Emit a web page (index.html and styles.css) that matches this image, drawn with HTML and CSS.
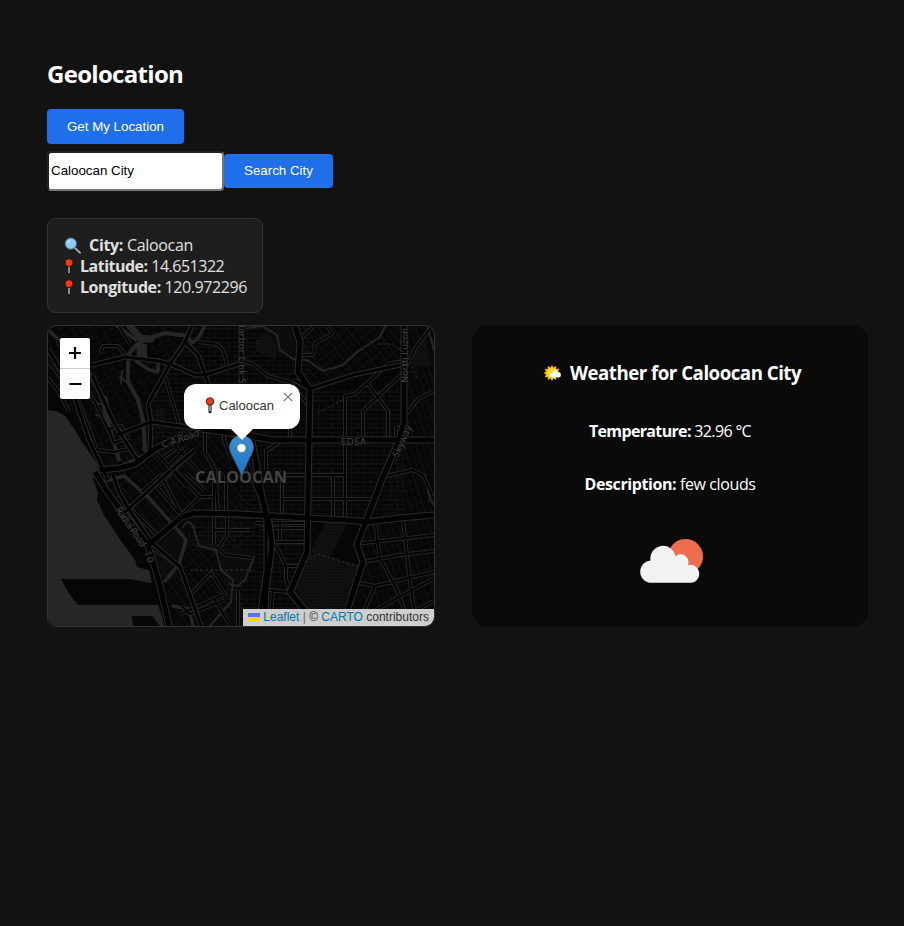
FILE: index.html
```html
<!DOCTYPE html>
<html lang="en">
<head>
<meta charset="utf-8">
<title>Geolocation</title>
<link rel="stylesheet" href="styles.css">
</head>
<body>
<svg class="defs" aria-hidden="true">
  <symbol id="pushpin" viewBox="0 0 10 18">
    <path d="M5 7V15.5" stroke="#111" stroke-width="3.2" stroke-linecap="round"/>
    <path d="M5 7V15.3" stroke="#ddd" stroke-width="1.2"/>
    <circle cx="5" cy="4.7" r="4" fill="#f03a17" stroke="#111" stroke-width=".8"/>
  </symbol>
</svg>
<main class="page">
  <h2 class="title">Geolocation</h2>
  <button class="btn locate">Get My Location</button>
  <div class="search">
    <input class="city-input" type="text" value="Caloocan City">
    <button class="btn find">Search City</button>
  </div>
  <section class="info">
    <div class="row"><svg class="lens" viewBox="0 0 18 18"><path d="M10.500 10.500l5.500 5.200" stroke="#111" stroke-width="4" stroke-linecap="round"/><path d="M11 11l5 4.700" stroke="#9aa5ad" stroke-width="2.200" stroke-linecap="round"/><circle cx="6.800" cy="6.600" r="5.700" fill="#8fc8f5" stroke="#4e6675" stroke-width="1"/><path d="M3.800 6.500a3 3 0 0 1 3-3" stroke="#d5edff" fill="none"/></svg><span class="txt city"><b>City:</b> Caloocan</span></div>
    <div class="row"><svg class="pin"><use href="#pushpin"/></svg><span class="txt lat"><b>Latitude:</b> 14.651322</span></div>
    <div class="row"><svg class="pin"><use href="#pushpin"/></svg><span class="txt lng"><b>Longitude:</b> 120.972296</span></div>
  </section>
  <div class="panels">
    <section class="map">
      <svg class="tiles" viewBox="48 326 386 300">
        <defs>
          <pattern id="blocks" width="13" height="9" patternUnits="userSpaceOnUse"><path d="M0 0H13M0 0V9M7 0V5M0 5H13" class="lane"/></pattern>
          <pattern id="slant" width="11" height="8" patternUnits="userSpaceOnUse" patternTransform="rotate(-38)"><path d="M0 0H11M0 0V8M5 0V8" class="lane"/></pattern>
          <pattern id="west" width="12" height="9" patternUnits="userSpaceOnUse" patternTransform="rotate(62)"><path d="M0 0H12M0 0V9M7 0V5" class="lane"/></pattern>
          <pattern id="east" width="12" height="8" patternUnits="userSpaceOnUse" patternTransform="rotate(-18)"><path d="M0 0H12M0 0V8M6 0V8" class="lane"/></pattern>
          <pattern id="dots" width="3" height="3" patternUnits="userSpaceOnUse"><rect width="3" height="3" fill="#0e0e0e"/><rect x="1" y="1" width="1" height="1" fill="#191919"/></pattern>
          <path id="streets" d="M48 361L77 397L97 450L114 452L133 448M57 340L95 402L111 435M48 378L58 391L69 411M109 429L121 426L128 438L114 443ZM130 344L119 326M100 354L103 346L118 346L125 355
            M198 342L217 344L223 350L228 367M165 376L180 427M153 449L187 487M182 430L174 450L160 460M170 465L186 448M186 473L204 490M205 432V452L215 470L218 514M224 432V440L231 460M170 440L202 475
            M142 492L161 475L181 514M129 507L157 535M157 487L179 513M174 470L200 497L182 514M200 497H214M157 487L190 454M214 475V545L226 555L252 558M226 475V514M227 515V535L219 548M214 530H250
            M148 545L180 567M190 595L211 573L225 594L194 608L181 614M225 600L190 614L182 606M215 600L228 622M238 590V626
            M240 360L253 364L268 376L290 382L307 404M297 342L314 326M298 355H313L315 343L332 334L327 326M345 439V396L355 394L388 364L404 361M363 439V411L404 372M388 439V411L367 383
            M404 371L416 347L430 329M407 413L418 399L434 391M266 451L281 441M266 449V470M290 427V439M279 475H345V519M345 475V440M309 475H345M282 475V519M282 499H370M333 475V519
            M255 523H307M260 528H307M280 519V540M306 542H274L286 566V578L290 592M282 470V475M284 566H302M262 589L288 592M270 626L273 590
            M355 544L434 535M375 523L380 558L397 590L410 626M403 520L411 590L417 626M363 562L400 555L434 551M360 583L375 586L434 572M358 625L375 586M363 617L434 578M385 626L434 601M383 477L412 470L423 475L434 500M396 441V428H404"/>
          <path id="roads" d="M92 365L125 357L158 361L170 364L195 375L205 375L245 362M192 326L185 342L170 364L148 404L151 422L150 452M48 349L72 389L89 440L108 480M92 375L115 425L138 461M185 342L198 355L205 375L210 388M117 435L151 422L202 429M100 470L120 468M113 475L119 492L128 508L152 543L180 567L201 626M125 512L178 464L195 450M295 380L310 389L353 375L400 365M241 326V388M240 440L251 475L261 498L266 520V570L258 626"/>
          <path id="arterials" d="M202 429L245 435L273 440H434M100 470L120 468L135 464L155 449L178 438M95 472L106 490L117 505L148 545L160 585L169 626M295 326L300 342L298 372L310 389L309 439L307 552L290 592L303 608L315 626M404 326V422L397 445L383 477L367 518L357 545L363 562L348 608V626M434 515L400 518L367 522L345 520L307 518L240 514L195 513L182 517L148 545M252 440L262 498L269 523L272 545L266 590L264 626"/>
        </defs>
        <rect x="48" y="326" width="386" height="300" fill="#060606"/>
        <path fill="url(#west)" d="M48 326H195L170 364L148 404L150 452L108 469L48 380Z"/>
        <path fill="url(#slant)" d="M150 424L245 436V513H185L148 545L95 475Z"/>
        <path fill="url(#blocks)" d="M195 326H310V520H240V440H150V404ZM310 389H404V520H307Z"/>
        <path fill="url(#slant)" d="M300 326H404V365L310 389ZM165 545L245 513V626H170Z"/>
        <path fill="url(#east)" d="M367 518L434 515V626H345ZM404 326H434V515H383L404 422Z"/>
        <path fill="url(#blocks)" d="M185 515H307V552L290 592L315 626H225V550H190Z"/>
        <path fill="url(#dots)" d="M325 522H348L330 558L358 566L345 608V626H315L292 592L307 560ZM256 338L270 331L277 343L275 360L256 350ZM411 350L425 340L432 364L413 368ZM159 406L166 414L164 425L153 420Z"/>
        <path fill="#0c0c0c" d="M150 545L183 526L188 545L176 580L165 583ZM220 551H253L247 575L230 585L219 574ZM262 327H292L297 358L280 350Z"/>
        <!-- water -->
        <path fill="#262626" d="M48 410L56 411L65 416L75 430L82 442L97 463L100 472L93 478L98 493L97 500L104 515L119 538L135 560L137 567L149 570L152 583L128 579H61L68 592L78 605H158L162 616L164 626H160L152 616H132L133 626H48Z"/>
        <g fill="none" stroke="#262626" stroke-linejoin="round" stroke-linecap="round">
          <path stroke-width="4" d="M128 362V382L138 400L143 420L145 450M128 355L136 345L150 338L165 333L188 336M119 460L113 440L108 420L102 398L91 376"/>
          <path stroke-width="7" d="M104 399L108 420M130 326L140 338L151 339M124 467L143 458"/>
          <path stroke-width="3.500" d="M117 326L136 340M48 330L60 341L78 356L92 376M158 360V372L150 370L137 362M188 336L192 343L198 338L205 326M102 482L124 476L148 497L176 528L186 540L179 564L165 581M173 606L189 609L193 626"/>
          <path stroke-width="2" d="M247 328L262 326L277 335L280 350L293 359L307 360L323 371L343 365L357 352L380 337L385 326"/>
          <path stroke-width="2" d="M122 371L121 383M120 377L125 381M100 404L93 402M106 417L96 415M183 527Q188 518 193 526L199 546L216 550L221 570L233 580L231 602L210 626M229 584L238 586L245 580L254 557M425 475L430 500L434 505M427 326L434 350"/>
        </g>
        <path fill="#262626" d="M136 344H147V357H137Z"/>
        <use href="#streets" class="line street-edge"/>
        <use href="#streets" class="line street-core"/>
        <use href="#roads" class="line road-edge"/>
        <use href="#arterials" class="line arterial-edge"/>
        <use href="#roads" class="line road-core"/>
        <use href="#arterials" class="line arterial-core"/>
        <path d="M190 570H252M305 562L318 554L358 566M378 344L391 344L408 355L417 379M318 413L342 400" fill="none" stroke="#303030" stroke-dasharray="3 2"/>
        <g class="labels">
          <text transform="translate(163 448) rotate(-19)" textLength="39">C-4 Road</text>
          <text x="341" y="445" textLength="25">EDSA</text>
          <text transform="translate(115 510) rotate(55)" textLength="46">Radial Road</text>
          <text transform="translate(144 552) rotate(72)" textLength="12">10</text>
          <text transform="translate(408 383) rotate(-90)" textLength="55">North Luzon</text>
          <text transform="translate(398 458) rotate(-66)" textLength="34">Skyway</text>
          <text transform="translate(239 321) rotate(90)" textLength="68">Harbor Link Se</text>
          <text class="place" x="195" y="482.500" textLength="92" lengthAdjust="spacingAndGlyphs">CALOOCAN</text>
        </g>
      </svg>
      <div class="zoom"><span class="zoom-btn"><svg viewBox="0 0 30 30"><path d="M9 15H21M15 9V21"/></svg></span><span class="zoom-btn"><svg viewBox="0 0 30 30"><path d="M9.500 15H21.500"/></svg></span></div>
      <svg class="marker" viewBox="0 0 25 41"><defs><linearGradient id="blue" x2="0" y2="1"><stop stop-color="#3b8cc9"/><stop offset="1" stop-color="#1f75cc"/></linearGradient></defs><path d="M12.500 .5C5.600.5.5 5.800.5 12.200c0 3.400 1.500 6.200 3.100 9.300L12.500 40l8.900-18.500c1.600-3.100 3.100-5.900 3.100-9.300C24.500 5.800 19.400.5 12.500.5z" fill="url(#blue)" stroke="#2e6c97" stroke-width=".6"/><circle cx="12.500" cy="13" r="4.500" fill="#fff" stroke="#2e6c97" stroke-width=".6"/></svg>
      <div class="popup"><svg class="pin"><use href="#pushpin"/></svg><span>Caloocan</span><svg class="close" viewBox="0 0 10 10"><path d="M.8.8l8.400 8.400M9.200.8L.8 9.200"/></svg></div>
      <div class="credit"><svg class="flag" viewBox="0 0 12 8"><path fill="#4C7BE1" d="M0 0h12v4H0z"/><path fill="#FFD500" d="M0 4h12v4H0z"/></svg> <a>Leaflet</a> <i>|</i> © <a>CARTO</a> contributors</div>
    </section>
    <section class="weather">
      <h3 class="heading"><svg class="sun" viewBox="0 0 20 18"><path d="M9 1l1.400 2.500L13 2l.3 3 3-.2L15 7.500 17.500 9 15 10.500l1.300 2.700-3-.2-.3 3-2.600-1.500L9 17l-1.400-2.500L5 16l-.3-3-3 .2L3 10.500.5 9 3 7.500 1.700 4.800l3 .2.3-3 2.600 1.500z" fill="#fcb80a"/><circle cx="9" cy="9" r="5" fill="#ffda1a"/><path d="M9 13.500a2.400 2.400 0 0 1 .3-4.800 3.200 3.200 0 0 1 6-.5 2.700 2.700 0 0 1 .7 5.300z" fill="#fff"/></svg><span class="txt head-text">Weather for Caloocan City</span></h3>
      <p class="line-text"><span class="txt temp"><b>Temperature:</b> 32.96 °C</span></p>
      <p class="line-text"><span class="txt desc"><b>Description:</b> few clouds</span></p>
      <svg class="cloud" viewBox="0 0 100 100"><circle cx="65.500" cy="45.500" r="17.500" fill="#ec6e4c"/><path d="M29 71.700a11.300 11.300 0 0 1 1.500-22.300 12.600 12.600 0 0 1 25-4 7.700 7.700 0 0 1 12.300 8.800 9 9 0 1 1 .7 17.500z" fill="#f2f2f0"/></svg>
    </section>
  </div>
</main>
</body>
</html>
```
FILE: styles.css
```css
* { box-sizing: border-box; }
body {
  margin: 0;
  background: #121212;
  color: #fff;
  font: 16px/21px "Open Sans", "Noto Sans", sans-serif;
}
.defs { position: absolute; width: 0; height: 0; }
.page { padding: 58px 36px 0 47px; }
.title { margin: 0 0 19px; font-size: 24px; line-height: 32px; letter-spacing: -0.7px; }
.btn {
  display: block;
  border: 0;
  border-radius: 4px;
  padding: 0;
  background: #1f6feb;
  color: #fff;
  font: 13.333px "Liberation Sans", sans-serif;
}
.locate { width: 137px; height: 35px; }
.find { width: 109px; height: 34px; margin-bottom: 1px; }
.search { display: flex; align-items: center; margin-top: 7px; }
.city-input {
  width: 177px;
  height: 40px;
  border: 2px inset #767676;
  border-radius: 4px;
  padding: 0 2px 2px;
  background: #fff;
  color: #000;
  font: 13.333px "Liberation Sans", sans-serif;
}
.info {
  width: 216px;
  height: 95px;
  margin-top: 27px;
  padding: 16px;
  border: 1px solid #333;
  border-radius: 8px;
  background: #1e1e1e;
  color: #e0e0e0;
}
.row { display: flex; align-items: center; height: 21px; white-space: nowrap; }
.txt { white-space: nowrap; }
.lens { width: 18px; height: 18px; margin-right: 7px; }
.pin { width: 10px; height: 18px; margin-right: 6px; flex: none; }
.city { letter-spacing: -0.32px; }
.lat { letter-spacing: -0.5px; }
.lng { letter-spacing: -0.42px; }
.panels { display: flex; justify-content: space-between; margin-top: 12px; }
.map {
  position: relative;
  width: 388px;
  height: 302px;
  overflow: hidden;
  border: 1px solid #333;
  border-radius: 10px;
  font-family: "Liberation Sans", sans-serif;
}
.tiles { display: block; width: 386px; height: 300px; }
.lane { fill: none; stroke: #161616; stroke-width: .8; }
.line { fill: none; stroke-linejoin: round; }
.street-edge { stroke: #252525; stroke-width: 4; }
.street-core { stroke: #040404; stroke-width: 2; }
.road-edge { stroke: #2a2a2a; stroke-width: 5; }
.road-core { stroke: #020202; stroke-width: 3; }
.arterial-edge { stroke: #2a2a2a; stroke-width: 7; }
.arterial-core { stroke: #020202; stroke-width: 5; }
.labels { fill: #484848; stroke: #080808; stroke-width: 1px; paint-order: stroke; font: 9.5px "Open Sans", sans-serif; }
.place { fill: #444; font-size: 16px; font-weight: 700; }
.zoom { position: absolute; left: 12px; top: 12px; width: 30px; border-radius: 2px; overflow: hidden; background: #fff; }
.zoom-btn { display: block; height: 31px; border-bottom: 1px solid #ccc; }
.zoom-btn:last-child { height: 30px; border: 0; }
.zoom-btn svg { display: block; width: 30px; height: 30px; fill: none; stroke: #000; stroke-width: 2.2; }
.marker { position: absolute; left: 181px; top: 109px; width: 25px; height: 41px; }
.popup {
  position: absolute;
  left: 136px;
  top: 58px;
  display: flex;
  align-items: center;
  width: 116px;
  height: 45px;
  padding: 0 20px 2px 21px;
  border-radius: 12px;
  background: #fff;
  color: #333;
  font-size: 13px;
}
.popup::after {
  content: "";
  position: absolute;
  left: 46px;
  top: 44px;
  border: 12px solid transparent;
  border-top-color: #fff;
  border-bottom: 0;
}
.popup .pin { height: 17px; margin-right: 4px; }
.close { position: absolute; right: 7px; top: 8px; width: 10px; height: 10px; stroke: #757575; stroke-width: 1.2; }
.credit {
  position: absolute;
  right: 0;
  bottom: 0;
  width: 191px;
  height: 17px;
  padding: 0 5px;
  background: rgba(255, 255, 255, .8);
  color: #333;
  font-size: 12px;
  line-height: 16px;
  white-space: nowrap;
}
.credit a { color: #0078a8; }
.credit i { font-style: normal; color: #666; }
.flag { width: 12px; height: 8px; }
.weather {
  display: flex;
  flex-direction: column;
  align-items: center;
  width: 396px;
  height: 302px;
  padding-top: 35px;
  border-radius: 16px;
  background: #0a0a0a;
}
.heading { display: flex; align-items: center; height: 25px; margin: 0 0 36px; padding-left: 4px; font-size: 18.7px; }
.sun { width: 20px; height: 18px; margin-right: 7px; }
.head-text { letter-spacing: -0.5px; }
.line-text { margin: 0 0 32px; }
.temp { letter-spacing: -0.65px; }
.desc { letter-spacing: -0.4px; }
.cloud { width: 100px; height: 100px; margin: -16px 0 0 -1px; }
```
